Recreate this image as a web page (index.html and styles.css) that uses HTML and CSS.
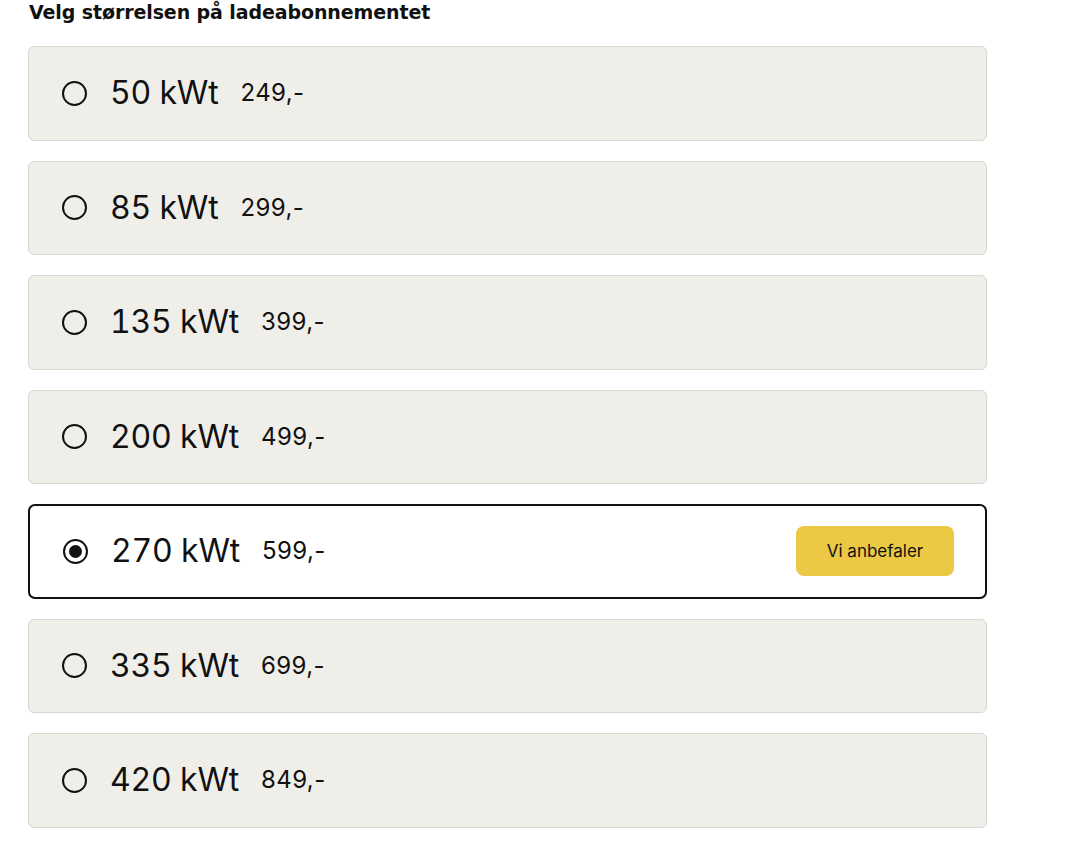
FILE: index.html
```html
<!DOCTYPE html>
<html lang="no">
<head>
<meta charset="utf-8">
<title>Ladeabonnement</title>
<link rel="stylesheet" href="styles.css">
</head>
<body>
<main class="page">
  <h2 class="title">Velg størrelsen på ladeabonnementet</h2>
  <form class="options">
    <label class="option"><input class="radio" type="radio" name="size"><span class="amount">50 kWt</span><span class="price">249,-</span></label>
    <label class="option"><input class="radio" type="radio" name="size"><span class="amount">85 kWt</span><span class="price">299,-</span></label>
    <label class="option"><input class="radio" type="radio" name="size"><span class="amount">135 kWt</span><span class="price">399,-</span></label>
    <label class="option"><input class="radio" type="radio" name="size"><span class="amount">200 kWt</span><span class="price">499,-</span></label>
    <label class="option selected"><input class="radio" type="radio" name="size" checked><span class="amount">270 kWt</span><span class="price">599,-</span><span class="badge">Vi anbefaler</span></label>
    <label class="option"><input class="radio" type="radio" name="size"><span class="amount">335 kWt</span><span class="price">699,-</span></label>
    <label class="option"><input class="radio" type="radio" name="size"><span class="amount">420 kWt</span><span class="price">849,-</span></label>
  </form>
</main>
</body>
</html>
```
FILE: styles.css
```css
html, body {
  margin: 0;
  padding: 0;
  background: #ffffff;
  color: #111111;
  font-family: Inter, "Noto Sans", sans-serif;
}

.page {
  width: 959px;
  padding: 0 0 0 28px;
}

.title {
  margin: 0 0 21px 1px;
  font-family: "DejaVu Sans", "Open Sans", sans-serif;
  font-size: 19px;
  font-weight: 700;
  line-height: 25px;
  letter-spacing: -0.1px;
  color: #111111;
}

.options {
  display: flex;
  flex-direction: column;
  gap: 20px;
}

.option {
  box-sizing: border-box;
  min-height: 94.5px;
  display: flex;
  align-items: center;
  padding: 0 31px 0 33px;
  background: #f0eee9;
  border: 1px solid #d9d6ce;
  border-radius: 6px;
  cursor: pointer;
}

.option.selected {
  background: #ffffff;
  border: 2px solid #111111;
  border-radius: 7px;
}

.radio {
  appearance: none;
  -webkit-appearance: none;
  box-sizing: border-box;
  width: 25px;
  height: 25px;
  margin: 0 23px 0 0;
  border: 2px solid #111111;
  border-radius: 50%;
  background: transparent;
  display: grid;
  place-items: center;
  flex: none;
}

.radio:checked::after {
  content: "";
  width: 13px;
  height: 13px;
  border-radius: 50%;
  background: #111111;
}

.amount {
  font-size: 32px;
  font-weight: 400;
  letter-spacing: -0.2px;
  line-height: 1;
  font-variant-numeric: tabular-nums;
}

.price {
  margin-left: 22px;
  font-size: 24px;
  font-weight: 400;
  line-height: 1;
  letter-spacing: 0.4px;
}

.badge {
  margin-left: auto;
  box-sizing: border-box;
  width: 158px;
  height: 50px;
  display: flex;
  align-items: center;
  justify-content: center;
  background: #ecc945;
  border-radius: 8px;
  font-size: 17px;
  color: #111111;
}
```
